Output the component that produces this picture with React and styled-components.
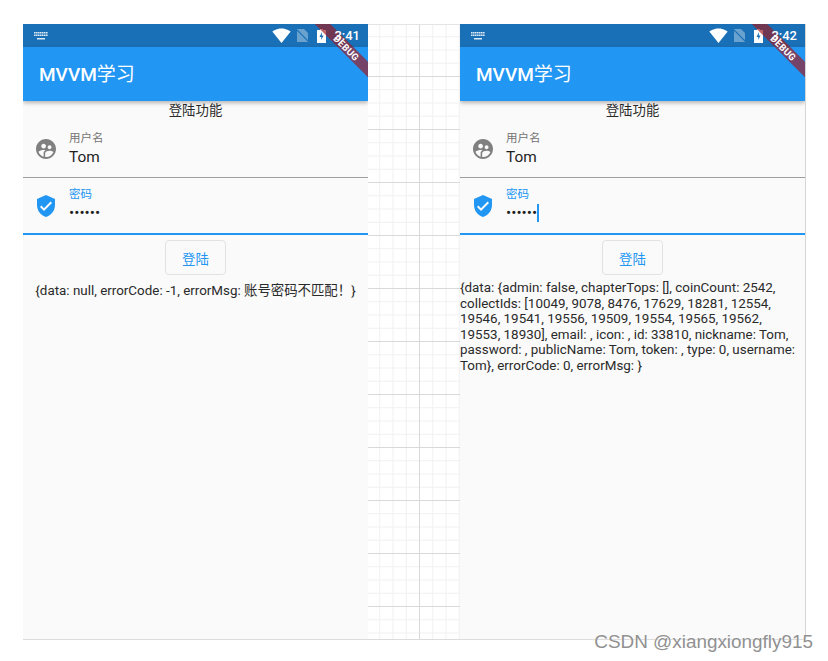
import React from 'react';
import styled, { createGlobalStyle } from 'styled-components';
import { MdSupervisedUserCircle, MdVerifiedUser, MdSignalWifi4Bar } from 'react-icons/md';

const GlobalStyle = createGlobalStyle`
  html, body {
    margin: 0;
    padding: 0;
    background: #fff;
  }
  * {
    box-sizing: border-box;
  }
`;

const Page = styled.div`
  position: relative;
  width: 828px;
  height: 661px;
  padding: 24px 0 0 23px;
  display: flex;
  align-items: flex-start;
  background: #fff;
  overflow: hidden;
  font-family: Roboto, 'Noto Sans CJK SC', sans-serif;
`;

const Phone = styled.div`
  position: relative;
  width: 345px;
  height: 616px;
  flex: none;
  display: flex;
  flex-direction: column;
  background: #fafafa;
  border-bottom: 1px solid #dcdcdc;
  overflow: hidden;
`;

const RightEdge = styled.div`
  width: 1px;
  height: 615px;
  flex: none;
  background: #d6d6d6;
`;

const GridGap = styled.div`
  width: 92px;
  height: 616px;
  flex: none;
  border-top: 1px solid #e4e4e4;
  border-bottom: 1px solid #dcdcdc;
  background-color: #fff;
  background-image:
    linear-gradient(#d9d9d9 1px, transparent 1px),
    linear-gradient(90deg, #d9d9d9 1px, transparent 1px),
    linear-gradient(#f0f0f0 1px, transparent 1px),
    linear-gradient(90deg, #f0f0f0 1px, transparent 1px);
  background-size: 53px 53px, 53px 53px, 13.25px 13.25px, 13.25px 13.25px;
  background-position: 0 51px, 51px 0, 0 51px, 51px 0;
`;

const StatusBar = styled.div`
  height: 23px;
  flex: none;
  display: flex;
  align-items: center;
  padding: 0 8px 0 11px;
  background: #1a70b6;
  color: #fff;
`;

const StatusIcons = styled.div`
  margin-left: auto;
  display: flex;
  align-items: center;
`;

/* the system clock sits on top of the debug ribbon */
const Clock = styled.span`
  position: relative;
  z-index: 2;
  margin-left: 8px;
  font-size: 13px;
  font-weight: 500;
  line-height: 23px;
`;

const SimSvg = styled.svg`
  margin-left: 6px;
`;

const BatterySvg = styled.svg`
  margin-left: 9px;
`;

const KeyboardIcon = () => (
  <svg width="14" height="8" viewBox="0 0 14 8">
    <path
      d="M0 .75h14M0 3.25h14"
      stroke="#fff"
      strokeOpacity="0.85"
      strokeWidth="1.5"
      strokeDasharray="1.6 .4"
    />
    <path d="M3 6h8v1.5H3z" fill="#fff" fillOpacity="0.85" />
  </svg>
);

const SimIcon = () => (
  <SimSvg width="11" height="13" viewBox="0 0 11 13">
    <path d="M0 0h7l4 4v9H0z" fill="#fff" fillOpacity="0.35" />
    <path d="M0 1l11 11" stroke="#1a70b6" strokeWidth="1.1" />
  </SimSvg>
);

const BatteryIcon = () => (
  <BatterySvg width="9" height="14" viewBox="0 0 9 14">
    <path d="M3 0h3v1h3v13H0V1h3z" fill="#fff" />
    <path d="M5 3L2.5 8H4.300v3L6.500 6.500H4.800z" fill="#1a70b6" />
  </BatterySvg>
);

const AppBar = styled.div`
  position: relative;
  height: 54px;
  flex: none;
  display: flex;
  align-items: center;
  padding: 0 0 3px 16px;
  background: #2196f3;
  color: #fff;
  font-size: 19px;
  font-weight: 500;
  box-shadow: 0 2px 4px rgba(0, 0, 0, 0.28);
`;

const TitleCjk = styled.span`
  font-weight: 400;
`;

const Body = styled.div`
  display: flex;
  flex-direction: column;
`;

const Heading = styled.div`
  height: 20px;
  text-align: center;
  font-size: 13.4px;
  line-height: 20px;
  color: #2a2a2a;
`;

const Field = styled.div`
  display: flex;
  align-items: center;
  height: 57px;
  padding-left: 11px;
  border-bottom: ${({ $active }) => ($active ? '2px solid #2196f3' : '1px solid #9e9e9e')};
  color: ${({ $active }) => ($active ? '#2196f3' : '#808080')};
`;

const FieldText = styled.div`
  display: flex;
  flex-direction: column;
  margin-left: 11px;
`;

const Label = styled.div`
  margin-bottom: 1px;
  font-size: 11.5px;
  line-height: 14px;
  color: ${({ $active }) => ($active ? '#2196f3' : '#757575')};
`;

const Value = styled.div`
  display: flex;
  align-items: center;
  height: 22px;
  font-size: 15.4px;
  color: #1f1f1f;
`;

const Cursor = styled.span`
  width: 2px;
  height: 18px;
  background: #2196f3;
`;

const ButtonRow = styled.div`
  display: flex;
  justify-content: center;
  padding-top: 5px;
`;

const LoginButton = styled.button`
  width: 61px;
  height: 35px;
  padding: 0;
  border: 1px solid #e2e2e2;
  border-radius: 4px;
  background: transparent;
  color: #2196f3;
  font-family: inherit;
  font-size: 13.4px;
`;

const Result = styled.div`
  padding: ${({ $center }) => ($center ? '8px 0 0' : '5px 0 0')};
  text-align: ${({ $center }) => ($center ? 'center' : 'left')};
  font-size: 13.4px;
  line-height: 15.6px;
  color: #2a2a2a;
`;

const Ribbon = styled.div`
  position: absolute;
  z-index: 1;
  top: 17px;
  right: -17px;
  width: 80px;
  height: 11px;
  padding-left: 4px;
  transform: rotate(45deg);
  background: rgba(160, 25, 30, 0.66);
  color: #fff;
  font-size: 9.5px;
  font-weight: 700;
  line-height: 11px;
  text-align: center;
  letter-spacing: 0.2px;
`;

const Watermark = styled.div`
  position: absolute;
  right: 15px;
  bottom: 8px;
  font-family: 'Liberation Sans', sans-serif;
  font-size: 18.9px;
  line-height: 22px;
  color: #919191;
  text-shadow: 0 0 2px #fff;
`;

const PhoneScreen = ({ time, result, center, cursor }) => (
  <Phone>
    <StatusBar>
      <KeyboardIcon />
      <StatusIcons>
        <MdSignalWifi4Bar size={19} />
        <SimIcon />
        <BatteryIcon />
        <Clock>{time}</Clock>
      </StatusIcons>
    </StatusBar>
    <AppBar>
      <span>
        MVVM<TitleCjk>学习</TitleCjk>
      </span>
    </AppBar>
    <Body>
      <Heading>登陆功能</Heading>
      <Field>
        <MdSupervisedUserCircle size={24} />
        <FieldText>
          <Label>用户名</Label>
          <Value>Tom</Value>
        </FieldText>
      </Field>
      <Field $active>
        <MdVerifiedUser size={24} />
        <FieldText>
          <Label $active>密码</Label>
          <Value>
            ••••••
            {cursor && <Cursor />}
          </Value>
        </FieldText>
      </Field>
      <ButtonRow>
        <LoginButton>登陆</LoginButton>
      </ButtonRow>
      <Result $center={center}>{result}</Result>
    </Body>
    <Ribbon>DEBUG</Ribbon>
  </Phone>
);

const App = () => (
  <>
    <GlobalStyle />
    <Page>
      <PhoneScreen
        time="3:41"
        center
        result="{data: null, errorCode: -1, errorMsg: 账号密码不匹配！}"
      />
      <GridGap />
      <PhoneScreen
        time="3:42"
        cursor
        result="{data: {admin: false, chapterTops: [], coinCount: 2542, collectIds: [10049, 9078, 8476, 17629, 18281, 12554, 19546, 19541, 19556, 19509, 19554, 19565, 19562, 19553, 18930], email: , icon: , id: 33810, nickname: Tom, password: , publicName: Tom, token: , type: 0, username: Tom}, errorCode: 0, errorMsg: }"
      />
      <RightEdge />
      <Watermark>CSDN @xiangxiongfly915</Watermark>
    </Page>
  </>
);

export default App;
